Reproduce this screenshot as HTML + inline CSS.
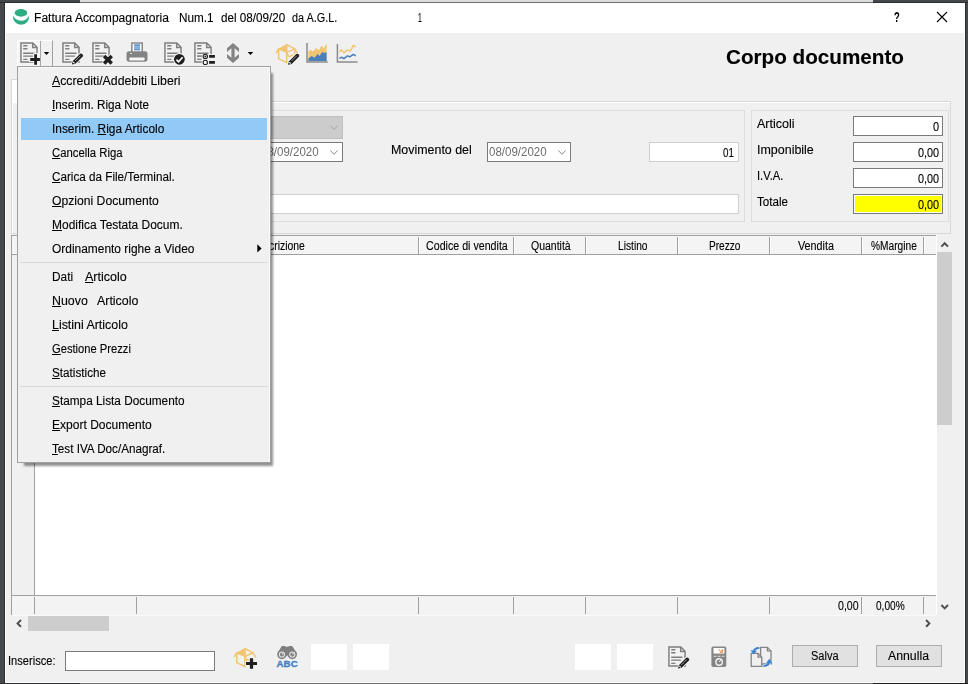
<!DOCTYPE html>
<html><head><meta charset="utf-8"><title>Fattura Accompagnatoria</title>
<style>
*{box-sizing:border-box;margin:0;padding:0}
html,body{width:968px;height:684px;overflow:hidden}
body{position:relative;background:#45494c;font-family:"Liberation Sans",sans-serif;font-size:12px;color:#000}
.a{position:absolute}
.t{position:absolute;white-space:pre;transform-origin:0 0;display:block;-webkit-text-stroke:0.12px currentColor}
.t u{text-decoration:underline;text-underline-offset:1px;text-decoration-thickness:1px}
.win{left:5px;top:3px;width:960px;height:680px;background:#fff}
.client{left:6px;top:33px;width:958px;height:649px;background:#f0f0f0}
.box{background:#fff;border:1px solid #7a7a7a}
.btn{background:#e1e1e1;border:1px solid #adadad}
.vl{width:1px;background:#a0a0a0}
.hl{height:1px;background:#a0a0a0}
svg{position:absolute;overflow:visible}
</style></head><body>
<!-- outer frame -->
<div class="a" style="left:80px;top:0;width:793px;height:2px;background:#dcdcdc"></div>
<div class="a" style="left:0;top:2px;width:968px;height:1px;background:#2b2d2f"></div>
<div class="a" style="left:80px;top:2px;width:793px;height:1px;background:#707070"></div>
<div class="a" style="left:4px;top:2px;width:1px;height:682px;background:#2b2d2f"></div>
<div class="a" style="left:965px;top:2px;width:1px;height:682px;background:#2b2d2f"></div>
<div class="a" style="left:0;top:683px;width:968px;height:1px;background:#2b2d2f"></div>
<div class="a" style="left:80px;top:683px;width:793px;height:1px;background:#707070"></div>
<div class="a" style="left:873px;top:683px;width:95px;height:1px;background:#1c1c1c"></div>

<div class="a win"></div>
<div class="a client"></div>

<!-- title bar icon -->
<svg style="left:0;top:0" width="40" height="33" viewBox="0 0 40 33">
  <ellipse cx="20.95" cy="12.9" rx="6.3" ry="3.85" fill="#2eae80"/>
  <path d="M13 15.6A8.1 8.1 0 1 0 29 15.4A8.8 8.8 0 0 1 13 15.6Z" fill="#2eae80"/>
</svg>
<!-- close X -->
<svg style="left:936px;top:11px" width="12" height="12" viewBox="0 0 12 12"><path d="M1 1L11 11M11 1L1 11" stroke="#000" stroke-width="1.1" fill="none"/></svg>

<!-- ===== toolbar ===== -->
<!-- split button frame -->
<div class="a" style="left:17px;top:40px;width:36px;height:26px;background:#f5f5f5;border-left:1px solid #fff;border-top:1px solid #fff;border-right:1px solid #a0a0a0"></div>
<div class="a vl" style="left:40px;top:41px;height:25px;background:#a6a6a6"></div>
<div class="a" style="left:41px;top:41px;width:11px;height:25px;background:#f0f0f0"></div>
<svg style="left:0;top:0" width="968" height="100" viewBox="0 0 968 100">
  <defs>
    <g id="doc">
      <path d="M0.95 1.05H12.8L17.05 5.3V20.05H0.95Z" fill="#f2f2f2" stroke="#7e7e7e" stroke-width="1.45"/>
      <path d="M12.7 1.2V5.4H16.9" fill="none" stroke="#7e7e7e" stroke-width="1.45"/>
      <path d="M3.2 3.7H7.4M3.2 6.7H7.4M3.2 11.2H14.5M3.2 14.1H12.9M3.2 17.3H7.4" stroke="#7e7e7e" stroke-width="1.35" fill="none"/>
    </g>
    <g id="boxi">
      <path d="M0 0L-8.4 4.5L-0.2 8Z" fill="#f2c572" stroke="#f2c572" stroke-width="1" stroke-linejoin="round"/>
      <g fill="none" stroke="#f2c572" stroke-width="1.5" stroke-linejoin="round" stroke-linecap="round">
        <path d="M0 0L8 4.3L-0.2 8"/>
        <path d="M-0.1 0.4V18"/>
        <path d="M-8.4 4.5L-10.6 8"/>
        <path d="M8 4.3L10.4 8.4"/>
        <path d="M-8.2 5.6V14.1L-0.2 18"/>
        <path d="M-0.2 8L1.6 11.6"/>
      </g>
    </g>
    <g id="pencil">
      <path d="M0 10L1 6.6L8.3 -0.7Q9.2 -1.4 10.1 -0.5L10.9 0.3Q11.7 1.2 10.9 2.1L3.6 9.3Z" fill="#f0f0f0" stroke="#f0f0f0" stroke-width="1.6"/>
      <path d="M0 10.1L1.1 6.7L8.4 -0.6Q9.3 -1.3 10.2 -0.5L11 0.4Q11.7 1.3 10.9 2.1L3.6 9.3Z" fill="#1e1e1e"/>
      <path d="M1.3 7.5L2.8 9" stroke="#f4f4f4" stroke-width="1.15"/>
      <path d="M3.5 6.4L8.8 1.1" stroke="#fff" stroke-width="1" stroke-dasharray="0.75 0.7"/>
    </g>
  </defs>
  <!-- 1 doc + plus -->
  <use href="#doc" x="20" y="42"/>
  <path d="M35.6 53.2V65.8M29.2 59.5H40.9" stroke="#f5f5f5" stroke-width="5" fill="none"/>
  <path d="M35.6 54.2V64.8M30.2 59.5H39.9" stroke="#1e1e1e" stroke-width="2.8" fill="none"/>
  <path d="M43.8 52H49.2L46.5 55Z" fill="#000"/>
  <!-- 2 doc + pencil -->
  <use href="#doc" x="62" y="42"/>
  <use href="#pencil" x="71.8" y="54.4"/>
  <!-- 3 doc + X -->
  <use href="#doc" x="92" y="42"/>
  <path d="M103.8 55.6L112 63.8M112 55.6L103.8 63.8" stroke="#f0f0f0" stroke-width="5.2" fill="none"/>
  <path d="M104.1 55.9L111.7 63.5M111.7 55.9L104.1 63.5" stroke="#1e1e1e" stroke-width="3.5" fill="none"/>
  <!-- 4 printer -->
  <rect x="131.85" y="43.05" width="10.4" height="10" fill="#fff" stroke="#838383" stroke-width="1.45"/>
  <rect x="134.2" y="44.4" width="5.8" height="5.8" fill="#9dbfe3"/>
  <path d="M134.2 45.2H140M134.2 49.4H140" stroke="#5b8fcf" stroke-width="1.5"/>
  <path d="M134.2 47.3H140" stroke="#7aa8da" stroke-width="1"/>
  <rect x="126.5" y="51.2" width="21" height="10.6" rx="2.8" fill="#838383"/>
  <rect x="129.4" y="57.5" width="15.1" height="3" rx="0.8" fill="#f6f6f6"/>
  <rect x="129.9" y="53" width="2.3" height="1" rx="0.4" fill="#e8e8e8"/>
  <!-- 5 doc + check -->
  <use href="#doc" x="164" y="42"/>
  <circle cx="179.4" cy="59.3" r="6.3" fill="#f0f0f0"/>
  <circle cx="179.4" cy="59.3" r="5.35" fill="#1e1e1e"/>
  <path d="M176.4 59.6L178.6 61.8L182.6 57.2" stroke="#fff" stroke-width="1.7" fill="none"/>
  <!-- 6 doc + options -->
  <use href="#doc" x="194" y="42"/>
  <rect x="201.8" y="54" width="14.4" height="11.4" fill="#f0f0f0"/>
  <path d="M197.2 56.1H201.4M197.2 59.3H201.4" stroke="#848484" stroke-width="1.3"/>
  <circle cx="205.3" cy="56.4" r="2.15" fill="#f0f0f0" stroke="#1e1e1e" stroke-width="1.1"/>
  <circle cx="205.3" cy="56.4" r="0.9" fill="#1e1e1e"/>
  <circle cx="205.3" cy="62.4" r="2.15" fill="#fff" stroke="#1e1e1e" stroke-width="1.1"/>
  <path d="M209.1 56.4H214.9M209.1 62.4H214.9" stroke="#1e1e1e" stroke-width="2.6"/>
  <!-- 7 up/down -->
  <path d="M233 43.1L239 48.3V52L234.6 48.2V57.8L239 54V57.7L233 62.9L227 57.7V54L231.4 57.8V48.2L227 52V48.3Z" fill="#848484"/>
  <path d="M247.7 52H253.2L250.45 55.1Z" fill="#000"/>
  <!-- 8 box + pencil -->
  <use href="#boxi" x="286.8" y="44.6"/>
  <path d="M294.8 50.6V54.4M289 56.6L293 55" fill="none" stroke="#f2c572" stroke-width="1.4" stroke-linecap="round"/>
  <use href="#pencil" x="288" y="54.6"/>
  <!-- 9 area chart -->
  <path d="M308.4 52L310.2 49.4L312.6 51.4L316.6 47.9L318.6 50.4L321.6 45.4L323.6 48.4L326.6 43.4V61H308.4Z" fill="#f2c572"/>
  <path d="M308.4 58.4L311.7 55.9L314.6 57.8L317.6 53.9L319.6 55.9L322.1 51.9L324.5 52.9L326.6 51.9V61H308.4Z" fill="#4a7fba"/>
  <path d="M307 43V62H327.8" fill="none" stroke="#8a8a8a" stroke-width="1.5"/>
  <!-- 10 line chart -->
  <path d="M339.4 51.9L341.4 49.7L343.9 52.9L347.4 49.9L350.3 51.1L353.3 45.4L355.8 46.9" fill="none" stroke="#f2c572" stroke-width="1.5" stroke-linejoin="round"/>
  <path d="M339.4 58.2L341.9 57.3L343.9 58.7L347.4 55.9L349.8 56.8L353.3 54.4L355.8 55.9" fill="none" stroke="#4a7fba" stroke-width="1.5" stroke-linejoin="round"/>
  <path d="M337.4 44V62H357.6" fill="none" stroke="#8a8a8a" stroke-width="1.5"/>
</svg>

<div class="a" style="left:40px;top:41px;width:1px;height:25px;background:#a6a6a6"></div>
<!-- ===== tab control / panels ===== -->
<div class="a" style="left:11px;top:79px;width:90px;height:24px;background:#fff;border:1px solid #d9d9d9;border-bottom:none"></div>
<div class="a" style="left:11px;top:101px;width:940px;height:133px;border:1px solid #d9d9d9"></div>
<div class="a" style="left:12px;top:102px;width:938px;height:131px;border-left:1px solid #fff;border-top:1px solid #fff"></div>
<div class="a" style="left:12px;top:80px;width:6px;height:23px;background:#fff"></div>
<!-- inner panels -->
<div class="a" style="left:17px;top:110px;width:728px;height:112px;border:1px solid #dcdcdc"></div>
<div class="a" style="left:751px;top:110px;width:198px;height:112px;border:1px solid #dcdcdc"></div>
<!-- disabled combo -->
<div class="a" style="left:259px;top:116px;width:84px;height:23px;background:#cccccc;border:1px solid #bfbfbf"></div>
<svg style="left:330px;top:125px" width="9" height="6" viewBox="0 0 9 6"><path d="M0.4 0.7L4 4.5L7.6 0.7" fill="none" stroke="#a3a3a3" stroke-width="1"/></svg>
<!-- date combos -->
<div class="a box" style="left:259px;top:142px;width:84px;height:20px"></div>
<svg style="left:330px;top:150px" width="9" height="6" viewBox="0 0 9 6"><path d="M0.4 0.5L4 4.3L7.6 0.5" fill="none" stroke="#8a8a8a" stroke-width="1"/></svg>
<div class="a box" style="left:487px;top:142px;width:84px;height:20px"></div>
<svg style="left:558px;top:150px" width="9" height="6" viewBox="0 0 9 6"><path d="M0.4 0.5L4 4.3L7.6 0.5" fill="none" stroke="#8a8a8a" stroke-width="1"/></svg>
<!-- 01 box -->
<div class="a" style="left:649px;top:142px;width:90px;height:20px;background:#fff;border:1px solid #d0d0d0"></div>
<!-- long text -->
<div class="a" style="left:23px;top:194px;width:716px;height:20px;background:#fff;border:1px solid #d0d0d0"></div>
<!-- totals -->
<div class="a box" style="left:853px;top:116px;width:90px;height:20px"></div>
<div class="a box" style="left:853px;top:142px;width:90px;height:20px"></div>
<div class="a box" style="left:853px;top:168px;width:90px;height:20px"></div>
<div class="a box" style="left:853px;top:194px;width:90px;height:20px"></div>
<div class="a" style="left:855px;top:196px;width:86px;height:16px;background:#ffff00"></div>

<!-- ===== grid ===== -->
<div class="a" style="left:11px;top:235px;width:926px;height:380px;background:#fff"></div>
<div class="a" style="left:11px;top:235px;width:925px;height:20px;background:#f4f4f4;border-top:1px solid #a0a0a0;border-bottom:1px solid #a0a0a0"></div>
<div class="a" style="left:11px;top:255px;width:24px;height:340px;background:#f0f0f0;border-right:1px solid #a0a0a0"></div>
<div class="a vl" style="left:11px;top:235px;height:380px"></div>
<div class="a" style="left:12px;top:595px;width:924px;height:20px;background:#f3f3f3;border-top:1px solid #a0a0a0"></div>
<div class="a" style="left:12px;top:615px;width:924px;height:1px;background:#fafafa"></div>
<div class="a vl" style="left:418px;top:237px;height:17px"></div><div class="a" style="left:419px;top:237px;width:1px;height:17px;background:#fff"></div>
<div class="a vl" style="left:513px;top:237px;height:17px"></div><div class="a" style="left:514px;top:237px;width:1px;height:17px;background:#fff"></div>
<div class="a vl" style="left:585px;top:237px;height:17px"></div><div class="a" style="left:586px;top:237px;width:1px;height:17px;background:#fff"></div>
<div class="a vl" style="left:677px;top:237px;height:17px"></div><div class="a" style="left:678px;top:237px;width:1px;height:17px;background:#fff"></div>
<div class="a vl" style="left:769px;top:237px;height:17px"></div><div class="a" style="left:770px;top:237px;width:1px;height:17px;background:#fff"></div>
<div class="a vl" style="left:861px;top:237px;height:17px"></div><div class="a" style="left:862px;top:237px;width:1px;height:17px;background:#fff"></div>
<div class="a vl" style="left:923px;top:237px;height:17px"></div><div class="a" style="left:924px;top:237px;width:1px;height:17px;background:#fff"></div>
<div class="a vl" style="left:34px;top:597px;height:17px"></div>
<div class="a vl" style="left:136px;top:597px;height:17px"></div>
<div class="a vl" style="left:418px;top:597px;height:17px"></div>
<div class="a vl" style="left:513px;top:597px;height:17px"></div>
<div class="a vl" style="left:585px;top:597px;height:17px"></div>
<div class="a vl" style="left:677px;top:597px;height:17px"></div>
<div class="a vl" style="left:769px;top:597px;height:17px"></div>
<div class="a vl" style="left:861px;top:597px;height:17px"></div>
<div class="a vl" style="left:923px;top:597px;height:17px"></div>
<!-- v scrollbar -->
<div class="a" style="left:937px;top:235px;width:15px;height:380px;background:#f0f0f0"></div>
<div class="a" style="left:937px;top:252px;width:15px;height:173px;background:#cdcdcd"></div>
<svg style="left:940px;top:241px" width="10" height="8" viewBox="0 0 10 8"><path d="M1.4 5.6L4.7 2.2L8 5.6" fill="none" stroke="#505050" stroke-width="2"/></svg>
<svg style="left:940px;top:603px" width="10" height="8" viewBox="0 0 10 8"><path d="M1.4 2L4.7 5.4L8 2" fill="none" stroke="#505050" stroke-width="2"/></svg>
<!-- h scrollbar -->
<div class="a" style="left:28px;top:616px;width:81px;height:15px;background:#cdcdcd"></div>
<svg style="left:16px;top:619px" width="6" height="10" viewBox="0 0 6 10"><path d="M5 1L1.6 4.4L5 7.8" fill="none" stroke="#505050" stroke-width="2"/></svg>
<svg style="left:925px;top:619px" width="6" height="10" viewBox="0 0 6 10"><path d="M1 1L4.4 4.4L1 7.8" fill="none" stroke="#505050" stroke-width="2"/></svg>

<!-- ===== bottom bar ===== -->
<div class="a box" style="left:65px;top:651px;width:150px;height:20px"></div>
<div class="a" style="left:311px;top:644px;width:36px;height:26px;background:#fff"></div>
<div class="a" style="left:353px;top:644px;width:36px;height:26px;background:#fff"></div>
<div class="a" style="left:575px;top:644px;width:36px;height:26px;background:#fff"></div>
<div class="a" style="left:617px;top:644px;width:36px;height:26px;background:#fff"></div>
<div class="a btn" style="left:792px;top:645px;width:66px;height:22px"></div>
<div class="a btn" style="left:876px;top:645px;width:66px;height:22px"></div>
<svg style="left:0;top:600px" width="968" height="84" viewBox="0 600 968 84">
  <!-- box + plus -->
  <use href="#boxi" x="245" y="648.5"/>
  <path d="M247 659.8L248.6 659.8" fill="none" stroke="#f2c572" stroke-width="1.4" stroke-linecap="round"/>
  <path d="M251.5 657.4V669.6M245.2 663.5H257.8" stroke="#f0f0f0" stroke-width="5" fill="none"/>
  <path d="M251.5 658.2V668.8M246 663.5H257" stroke="#1e1e1e" stroke-width="3.2" fill="none"/>
  <!-- binoculars ABC -->
  <path d="M281.3 646.8Q281.4 646 282.3 646H284.7Q285.5 646 285.7 646.8H288.3Q288.5 646 289.3 646H291.7Q292.6 646 292.7 646.8L296.9 653.4L292.3 656.4H281.9L277.3 653.4Z" fill="#7f7f7f"/>
  <circle cx="281.9" cy="654.5" r="4.7" fill="#7f7f7f"/><circle cx="292.3" cy="654.5" r="4.7" fill="#7f7f7f"/>
  <path d="M285.9 657.4L287.1 654.9L288.3 657.4Z" fill="#f0f0f0"/>
  <circle cx="281.9" cy="654.5" r="3.1" fill="#e9e9e9"/><circle cx="292.3" cy="654.5" r="3.1" fill="#e9e9e9"/>
  <circle cx="281.9" cy="654.6" r="2.1" fill="#858585"/><circle cx="292.3" cy="654.6" r="2.1" fill="#858585"/>
  <circle cx="282.6" cy="653.7" r="0.8" fill="#d9d9d9"/><circle cx="293" cy="653.7" r="0.8" fill="#d9d9d9"/>
  <text x="276.6" y="667.2" font-family="Liberation Sans, sans-serif" font-weight="700" font-size="9.3" fill="#4180c4" stroke="#4180c4" stroke-width="0.3" textLength="21.1" lengthAdjust="spacingAndGlyphs">ABC</text>
  <!-- doc + pencil -->
  <use href="#doc" x="668" y="646"/>
  <use href="#pencil" x="678" y="658.4"/>
  <!-- device -->
  <rect x="711.4" y="646.4" width="14.9" height="20.7" rx="1.8" fill="#848484"/>
  <rect x="713.5" y="648" width="10.9" height="5.6" fill="#fff"/>
  <path d="M718.6 649.2Q719.4 651.6 721 651.2T722.6 649.4V652.4H719.8" stroke="#f08a3c" stroke-width="1" fill="none"/>
  <path d="M713.6 656.2H716.4M717.6 656.2H720.4M721.6 656.2H724.4" stroke="#e8e8e8" stroke-width="1.1"/>
  <circle cx="719.1" cy="662" r="3.9" fill="#f2f2f2"/>
  <circle cx="719.1" cy="662" r="2.5" fill="#848484"/>
  <path d="M719.1 662L721.6 659.5" stroke="#f2f2f2" stroke-width="1"/>
  <!-- copy / refresh -->
  <g fill="#f0f0f0" stroke="#848484" stroke-width="1.3">
    <path d="M760.6 647.3H767.4L771 650.9V664H760.6Z"/>
    <path d="M767.4 647.3V650.9H771" fill="none"/>
    <path d="M751.2 653.4H758L761.8 657.2V666.4H751.2Z"/>
    <path d="M758 653.4V657.2H761.8" fill="none"/>
  </g>
  <path d="M759.4 647.6Q754 647.6 753.4 652" fill="none" stroke="#f0f0f0" stroke-width="4"/>
  <path d="M759.4 648Q754.4 647.8 753.8 651.6" fill="none" stroke="#3f86d2" stroke-width="2.2"/>
  <path d="M750.6 650.2L753.4 654.6L757 650.8Z" fill="#3f86d2"/>
  <path d="M763.4 666Q768.8 666.2 769.4 662" fill="none" stroke="#f0f0f0" stroke-width="4"/>
  <path d="M763.4 665.8Q768.4 666 769 662.4" fill="none" stroke="#3f86d2" stroke-width="2.2"/>
  <path d="M765.8 663.2L769.4 658.8L772.4 663.6Z" fill="#3f86d2"/>
</svg>

<span class="t" style="left:34.0px;top:12px;font-size:12px;line-height:12px;font-weight:400;color:#000;transform:scaleX(1.0069)">Fattura Accompagnatoria</span>
<span class="t" style="left:179.0px;top:12px;font-size:12px;line-height:12px;font-weight:400;color:#000;transform:scaleX(0.9761)">Num.1</span>
<span class="t" style="left:221.0px;top:12px;font-size:12px;line-height:12px;font-weight:400;color:#000;transform:scaleX(0.9733)">del 08/09/20</span>
<span class="t" style="left:291.8px;top:12px;font-size:12px;line-height:12px;font-weight:400;color:#000;transform:scaleX(0.9032)">da A.G.L.</span>
<span class="t" style="left:417.6px;top:12px;font-size:12px;line-height:12px;font-weight:400;color:#000;transform:scaleX(0.5682)">1</span>
<span class="t" style="left:894.3px;top:10px;font-size:14px;line-height:14px;font-weight:700;color:#000;transform:scaleX(0.6657)">?</span>
<span class="t" style="left:726.4px;top:47px;font-size:20px;line-height:20px;font-weight:700;color:#000;transform:scaleX(1.0330)">Corpo documento</span>
<span class="t" style="left:391.0px;top:144px;font-size:12px;line-height:12px;font-weight:400;color:#000;transform:scaleX(1.0353)">Movimento del</span>
<span class="t" style="left:261.4px;top:146px;font-size:12px;line-height:12px;font-weight:400;color:#6d6d6d;-webkit-text-stroke:0;transform:scaleX(0.9590)">08/09/2020</span>
<span class="t" style="left:489.4px;top:146px;font-size:12px;line-height:12px;font-weight:400;color:#6d6d6d;-webkit-text-stroke:0;transform:scaleX(0.9590)">08/09/2020</span>
<span class="t" style="left:722.7px;top:147px;font-size:12px;line-height:12px;font-weight:400;color:#000;transform:scaleX(0.8159)">01</span>
<span class="t" style="left:757.2px;top:118px;font-size:12px;line-height:12px;font-weight:400;color:#000;transform:scaleX(1.0440)">Articoli</span>
<span class="t" style="left:757.2px;top:144px;font-size:12px;line-height:12px;font-weight:400;color:#000;transform:scaleX(1.0383)">Imponibile</span>
<span class="t" style="left:757.2px;top:170px;font-size:12px;line-height:12px;font-weight:400;color:#000;transform:scaleX(0.9310)">I.V.A.</span>
<span class="t" style="left:757.2px;top:196px;font-size:12px;line-height:12px;font-weight:400;color:#000;transform:scaleX(0.9678)">Totale</span>
<span class="t" style="left:933.0px;top:121px;font-size:12px;line-height:12px;font-weight:400;color:#000;transform:scaleX(0.9121)">0</span>
<span class="t" style="left:918.0px;top:147px;font-size:12px;line-height:12px;font-weight:400;color:#000;transform:scaleX(0.9033)">0,00</span>
<span class="t" style="left:918.0px;top:173px;font-size:12px;line-height:12px;font-weight:400;color:#000;transform:scaleX(0.9033)">0,00</span>
<span class="t" style="left:918.0px;top:199px;font-size:12px;line-height:12px;font-weight:400;color:#000;transform:scaleX(0.9033)">0,00</span>
<span class="t" style="left:425.5px;top:240px;font-size:12px;line-height:12px;font-weight:400;color:#000;transform:scaleX(0.8885)">Codice di vendita</span>
<span class="t" style="left:530.6px;top:240px;font-size:12px;line-height:12px;font-weight:400;color:#000;transform:scaleX(0.8749)">Quantità</span>
<span class="t" style="left:617.6px;top:240px;font-size:12px;line-height:12px;font-weight:400;color:#000;transform:scaleX(0.8505)">Listino</span>
<span class="t" style="left:709.1px;top:240px;font-size:12px;line-height:12px;font-weight:400;color:#000;transform:scaleX(0.8432)">Prezzo</span>
<span class="t" style="left:798.2px;top:240px;font-size:12px;line-height:12px;font-weight:400;color:#000;transform:scaleX(0.8989)">Vendita</span>
<span class="t" style="left:870.8px;top:240px;font-size:12px;line-height:12px;font-weight:400;color:#000;transform:scaleX(0.8477)">%Margine</span>
<span class="t" style="left:269.2px;top:240px;font-size:12px;line-height:12px;font-weight:400;color:#000;transform:scaleX(0.8680)">crizione</span>
<span class="t" style="left:837.7px;top:600px;font-size:12px;line-height:12px;font-weight:400;color:#000;transform:scaleX(0.8819)">0,00</span>
<span class="t" style="left:875.7px;top:600px;font-size:12px;line-height:12px;font-weight:400;color:#000;transform:scaleX(0.8404)">0,00%</span>
<span class="t" style="left:8.3px;top:655px;font-size:12px;line-height:12px;font-weight:400;color:#000;transform:scaleX(0.9249)">Inserisce:</span>
<span class="t" style="left:811.0px;top:650px;font-size:12px;line-height:12px;font-weight:400;color:#000;transform:scaleX(0.9157)">Salva</span>
<span class="t" style="left:888.3px;top:650px;font-size:12px;line-height:12px;font-weight:400;color:#000;transform:scaleX(1.0242)">Annulla</span>

<!-- ===== popup menu ===== -->
<div class="a" style="left:24px;top:73px;width:249.4px;height:392.6px;background:rgba(0,0,0,0.43);filter:blur(0.9px)"></div>
<div class="a" style="left:17px;top:66px;width:254px;height:397px;background:#f0f0f0;border:1px solid #a0a0a0;box-shadow:inset -1px 0 0 #f9f9f9, inset 0 1px 0 #f9f9f9"></div>
<div class="a" style="left:21px;top:118px;width:246px;height:22px;background:#91c9f7"></div>
<div class="a" style="left:20px;top:262px;width:248px;height:1px;background:#d7d7d7"></div>
<div class="a" style="left:20px;top:386px;width:248px;height:1px;background:#d7d7d7"></div>
<svg style="left:257px;top:243.5px" width="5" height="9" viewBox="0 0 5 9"><path d="M0.3 0.3L4.6 4.4L0.3 8.5Z" fill="#000"/></svg>
<span class="t" style="left:52.1px;top:75px;font-size:12px;line-height:12px;font-weight:400;color:#000;transform:scaleX(1.0255)"><u>A</u>ccrediti/Addebiti Liberi</span>
<span class="t" style="left:52.1px;top:99px;font-size:12px;line-height:12px;font-weight:400;color:#000;transform:scaleX(0.9761)"><u>I</u>nserim. Riga Note</span>
<span class="t" style="left:52.1px;top:123px;font-size:12px;line-height:12px;font-weight:400;color:#000;transform:scaleX(0.9905)">Inserim. <u>R</u>iga Articolo</span>
<span class="t" style="left:52.1px;top:147px;font-size:12px;line-height:12px;font-weight:400;color:#000;transform:scaleX(0.9449)"><u>C</u>ancella Riga</span>
<span class="t" style="left:52.1px;top:171px;font-size:12px;line-height:12px;font-weight:400;color:#000;transform:scaleX(0.9742)"><u>C</u>arica da File/Terminal.</span>
<span class="t" style="left:52.1px;top:195px;font-size:12px;line-height:12px;font-weight:400;color:#000;transform:scaleX(1.0134)"><u>O</u>pzioni Documento</span>
<span class="t" style="left:52.1px;top:219px;font-size:12px;line-height:12px;font-weight:400;color:#000;transform:scaleX(0.9972)"><u>M</u>odifica Testata Docum.</span>
<span class="t" style="left:52.1px;top:243px;font-size:12px;line-height:12px;font-weight:400;color:#000;transform:scaleX(0.9944)">Ordinamento righe a Video</span>
<span class="t" style="left:52.1px;top:271px;font-size:12px;line-height:12px;font-weight:400;color:#000;transform:scaleX(0.9886)">Dati</span>
<span class="t" style="left:52.1px;top:295px;font-size:12px;line-height:12px;font-weight:400;color:#000;transform:scaleX(1.0321)"><u>N</u>uovo</span>
<span class="t" style="left:52.1px;top:319px;font-size:12px;line-height:12px;font-weight:400;color:#000;transform:scaleX(1.0330)"><u>L</u>istini Articolo</span>
<span class="t" style="left:52.1px;top:343px;font-size:12px;line-height:12px;font-weight:400;color:#000;transform:scaleX(0.9315)"><u>G</u>estione Prezzi</span>
<span class="t" style="left:52.1px;top:367px;font-size:12px;line-height:12px;font-weight:400;color:#000;transform:scaleX(0.9754)"><u>S</u>tatistiche</span>
<span class="t" style="left:52.1px;top:395px;font-size:12px;line-height:12px;font-weight:400;color:#000;transform:scaleX(0.9840)"><u>S</u>tampa Lista Documento</span>
<span class="t" style="left:52.1px;top:419px;font-size:12px;line-height:12px;font-weight:400;color:#000;transform:scaleX(1.0031)"><u>E</u>xport Documento</span>
<span class="t" style="left:52.1px;top:443px;font-size:12px;line-height:12px;font-weight:400;color:#000;transform:scaleX(0.9724)"><u>T</u>est IVA Doc/Anagraf.</span>
<span class="t" style="left:85.1px;top:271px;font-size:12px;line-height:12px;font-weight:400;color:#000;transform:scaleX(1.0421)"><u>A</u>rticolo</span>
<span class="t" style="left:97.4px;top:295px;font-size:12px;line-height:12px;font-weight:400;color:#000;transform:scaleX(1.0346)">Articolo</span>
</body></html>
